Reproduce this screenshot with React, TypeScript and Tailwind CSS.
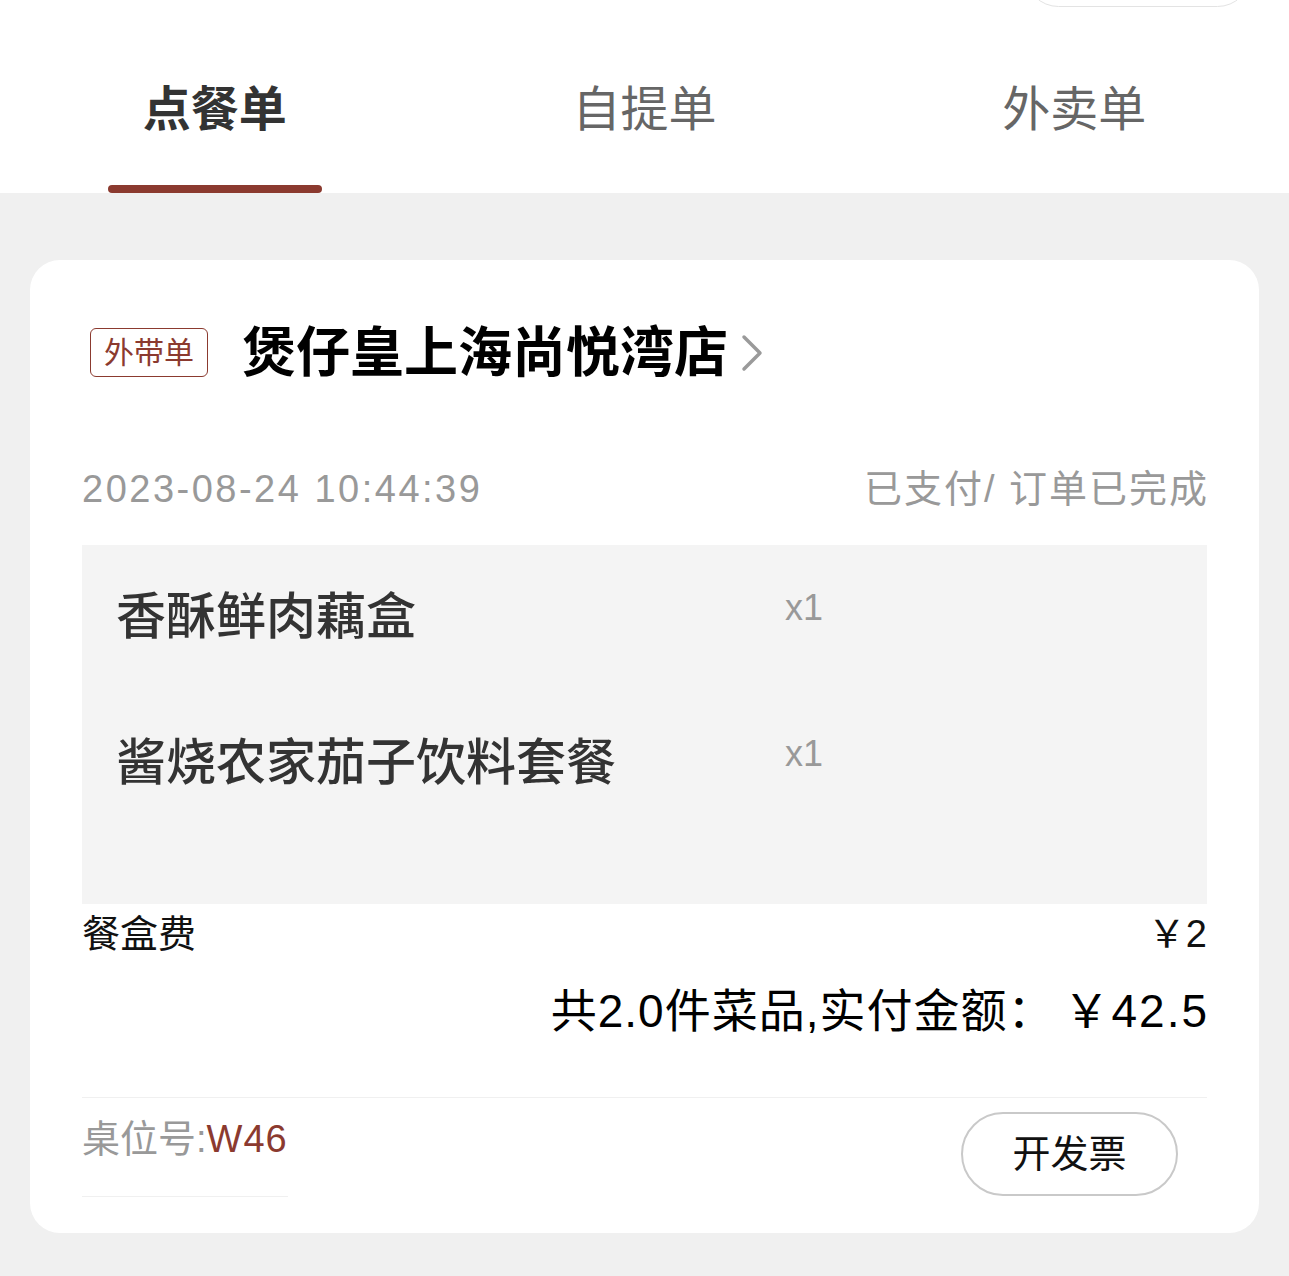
export default function App() {
  const tabs = ["点餐单", "自提单", "外卖单"];
  const active = 0;

  const items = [
    { name: "香酥鲜肉藕盒", qty: 1 },
    { name: "酱烧农家茄子饮料套餐", qty: 1 },
  ];

  return (
    <div className="min-h-screen bg-[#f0f0f0] font-['Liberation_Sans','Noto_Sans_CJK_SC',sans-serif]">
      {/* Tabs */}
      <div className="relative flex h-[193px] overflow-hidden bg-white">
        <div className="absolute right-[38px] top-[-60px] h-[67px] w-[226px] rounded-full border border-[#e3e3e3]" />
        {tabs.map((t, i) => (
          <div key={t} className="flex flex-1 flex-col items-center pt-[86px]">
            <span
              className={
                i === active
                  ? "text-[48px] leading-[48px] font-bold text-[#333]"
                  : "text-[48px] leading-[48px] text-[#666]"
              }
            >
              {t}
            </span>
            {i === active && <div className="mt-auto h-[8px] w-[214px] rounded-full bg-[#8b3a2f]" />}
          </div>
        ))}
      </div>

      {/* Order card */}
      <div className="mx-[30px] mt-[67px] rounded-[30px] bg-white px-[52px] pt-[68px] pb-[36px]">
        <div className="flex h-[49px] items-center pl-[8px]">
          <div className="flex h-[49px] items-center rounded-[6px] border-[1.5px] border-[#8b3a2f] px-[13px] text-[30px] leading-none text-[#8b3a2f]">
            外带单
          </div>
          <span className="ml-[34px] text-[54px] leading-none font-bold text-black">煲仔皇上海尚悦湾店</span>
          <svg className="ml-[12px]" width="24" height="40" viewBox="0 0 24 40" fill="none">
            <polyline points="4,4 20,20 4,36" stroke="#9a9a9a" strokeWidth="3.5" strokeLinecap="round" strokeLinejoin="round" />
          </svg>
        </div>

        <div className="mt-[93px] flex items-center justify-between text-[38px] leading-[38px] text-[#999]">
          <span className="tracking-[2.5px]">2023-08-24 10:44:39</span>
          <span className="-mr-[2px] tracking-[2px]">已支付/ 订单已完成</span>
        </div>

        <div className="mt-[37px] h-[359px] bg-[#f4f4f4] pt-[47px] pl-[34px]">
          {items.map((it) => (
            <div key={it.name} className="mb-[96px] flex items-start">
              <span className="w-[669px] text-[50px] leading-[50px] font-medium text-[#333]">{it.name}</span>
              <span className="-mt-[2px] text-[36px] leading-[36px] text-[#999]">x{it.qty}</span>
            </div>
          ))}
        </div>

        <div className="mt-[11px] flex items-center justify-between text-[38px] leading-[38px] text-[#111]">
          <span>餐盒费</span>
          <span>￥2</span>
        </div>

        <div className="mt-[35px] flex items-baseline justify-end text-[46px] leading-[46px] text-black">
          <span className="tracking-[1px]">共2.0件菜品,实付金额：</span>
          <span className="-mr-[2px] ml-[9px] tracking-[2px]">￥42.5</span>
        </div>

        <div className="mt-[63px] h-px bg-[#f0f0f0]" />

        <div className="flex items-start justify-between pt-[14px]">
          <div className="border-b border-[#f0f0f0] pt-[8px] pb-[38px] text-[38px] leading-[38px] text-[#999]">
            桌位号:<span className="text-[#8b3a2f] tracking-[1px]">W46</span>
          </div>
          <button className="mr-[29px] h-[84px] w-[217px] rounded-full border-2 border-[#c9c9c9] text-[38px] text-[#111]">
            开发票
          </button>
        </div>
      </div>
    </div>
  );
}
